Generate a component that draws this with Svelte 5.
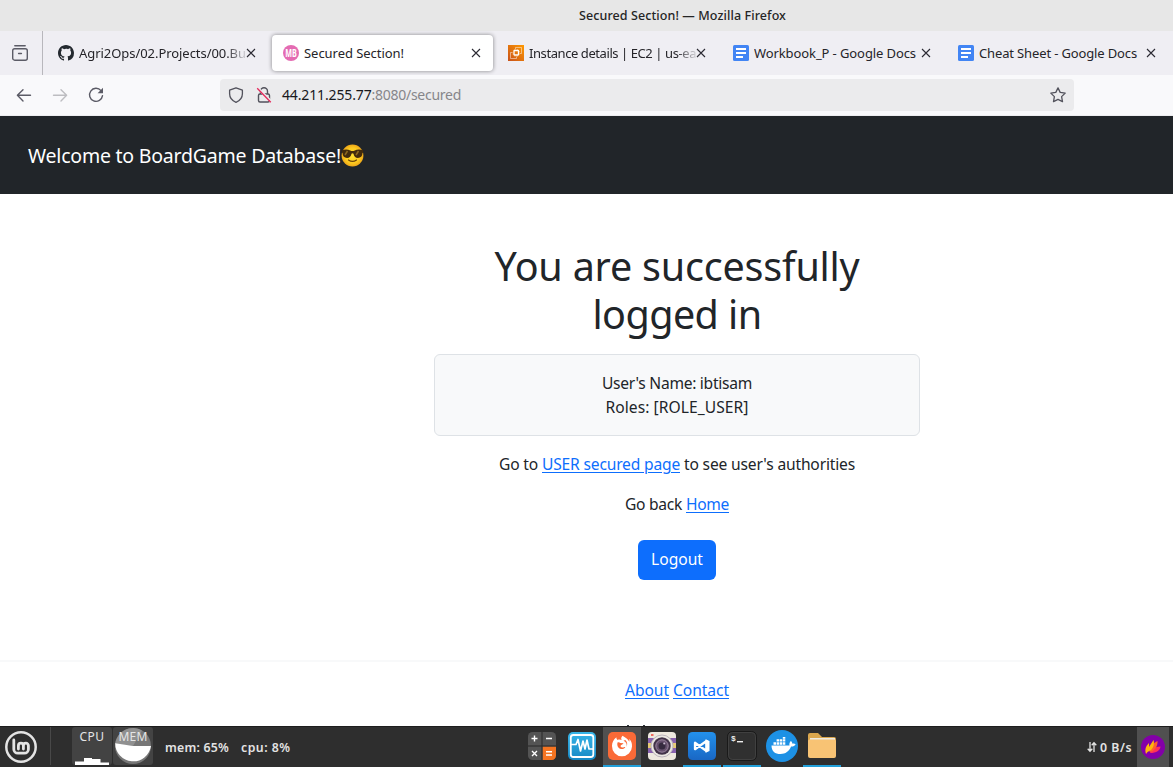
<script>
  const tabs = [
    { icon: 'github', title: 'Agri2Ops/02.Projects/00.Bu', width: 167, fade: true },
    { icon: 'mb', title: 'Secured Section!', width: 100, active: true },
    { icon: 'ec2', title: 'Instance details | EC2 | us-ea', width: 167, fade: true },
    { icon: 'docs', title: 'Workbook_P - Google Docs', width: 162 },
    { icon: 'docs', title: 'Cheat Sheet - Google Docs', width: 158 }
  ];
  const launchers = [
    { icon: 'calc' },
    { icon: 'monitor' },
    { icon: 'firefox', open: true, focused: true },
    { icon: 'camera' },
    { icon: 'code', open: true },
    { icon: 'terminal', open: true },
    { icon: 'docker' },
    { icon: 'folder', open: true }
  ];

  // Tracks a label so that it occupies the given advance width.
  function fit(node, width) {
    const natural = node.getBoundingClientRect().width;
    const count = node.textContent.length;
    node.style.letterSpacing = `${(width - natural) / count}px`;
  }
</script>

<div class="screen">
  <div class="titlebar"><span use:fit={207}>Secured Section! — Mozilla Firefox</span></div>

  <div class="tabs">
    <div class="recent">
      <svg width="16" height="16" viewBox="0 0 16 16" fill="none" stroke="#5b5b66" stroke-width="1.4" stroke-linecap="round">
        <path d="M2.8 .8h10.4" /><rect x=".7" y="3.8" width="14.6" height="11.4" rx="2" /><path d="M6.6 8.5h2.8" />
      </svg>
    </div>
    {#each tabs as tab}
      <div class="tab" class:active={tab.active}>
        <svg class="favicon" width="16" height="16" viewBox="0 0 16 16">
          {#if tab.icon === 'github'}
            <path fill="#24292f" d="M8 0C3.58 0 0 3.58 0 8c0 3.54 2.29 6.53 5.47 7.59.4.07.55-.17.55-.38v-1.49c-2.01.37-2.53-.49-2.69-.94-.09-.23-.48-.94-.82-1.13-.28-.15-.68-.52-.01-.53.63-.01 1.08.58 1.23.82.72 1.21 1.87.87 2.33.66.07-.52.28-.87.51-1.07-1.78-.2-3.64-.89-3.64-3.95 0-.87.31-1.59.82-2.15-.08-.2-.36-1.02.08-2.12 0 0 .67-.21 2.2.82A7.6 7.6 0 0 1 8 3.86c.68 0 1.36.09 2 .27 1.53-1.04 2.2-.82 2.2-.82.44 1.1.16 1.92.08 2.12.51.56.82 1.27.82 2.15 0 3.07-1.87 3.75-3.65 3.95.29.25.54.73.54 1.48v2.2c0 .21.15.46.55.38A8.01 8.01 0 0 0 16 8c0-4.42-3.58-8-8-8z" />
          {:else if tab.icon === 'mb'}
            <circle cx="8" cy="8" r="8" fill="#e46bb2" />
            <text x="8" y="11.6" text-anchor="middle" textLength="11.5" lengthAdjust="spacingAndGlyphs" font-size="10" font-weight="700" fill="#fff">MB</text>
          {:else if tab.icon === 'ec2'}
            <defs><linearGradient id="orange" x1="0" y1="1" x2="1" y2="0"><stop stop-color="#c8511b" /><stop offset="1" stop-color="#f90" /></linearGradient></defs>
            <rect width="16" height="16" fill="url(#orange)" />
            <g fill="none" stroke="#fff">
              <rect x="6" y="5.5" width="4.5" height="4.5" rx=".4" stroke-width="1.3" />
              <path stroke-width=".8" stroke-opacity=".6" d="M4.600 7.500H2.500v6h6V11.500M7.500 4V2.500h6v6h-1.500" />
              <path stroke-width=".8" stroke-opacity=".5" d="M7 4v1.200M9.300 4v1.200M12 6.700h-1.200M12 9h-1.200M7 10.600v1.200M9.300 10.600v1.200M4.500 9h1.200" />
            </g>
          {:else}
            <rect width="16" height="16" rx="1.500" fill="#4285f4" />
            <path fill="#fff" d="M3 3h10v2H3zM3 7h10v2H3zM3 11h7v2H3z" />
          {/if}
        </svg>
        <span class="label" class:fade={tab.fade}><span use:fit={tab.width}>{tab.title}</span></span>
        <svg class="close" width="10" height="10" viewBox="0 0 10 10"><path d="M1 1l8 8M9 1L1 9" stroke="#2b2a33" stroke-width="1.1" /></svg>
      </div>
    {/each}
  </div>

  <div class="toolbar">
    <div class="nav">
      <svg width="16" height="16" viewBox="0 0 16 16" fill="none" stroke="#5b5b66" stroke-width="1.4" stroke-linecap="round" stroke-linejoin="round"><path d="M14.500 8.300H1.500M7 2.700L1.400 8.300 7 13.900" /></svg>
      <svg width="16" height="16" viewBox="0 0 16 16" fill="none" stroke="#bdbdc1" stroke-width="1.4" stroke-linecap="round" stroke-linejoin="round"><path d="M1.500 8.300h13M9 2.700l5.600 5.600L9 13.900" /></svg>
      <svg width="16" height="16" viewBox="0 0 16 16" fill="none" stroke="#5b5b66" stroke-width="1.4" stroke-linecap="round"><path d="M13 3.600A6.500 6.500 0 1 0 14.500 8.600" /><path fill="#5b5b66" stroke="none" d="M15 .8v5.400H9.600z" /></svg>
    </div>
    <div class="address">
      <svg width="16" height="16" viewBox="0 0 16 16" fill="none" stroke="#52525c" stroke-width="1.3" stroke-linejoin="round"><path d="M8 .8l6.400 2.400v3.500c0 3.800-2.600 7-6.400 8.600-3.800-1.600-6.400-4.800-6.400-8.600V3.200z" /></svg>
      <svg class="lock" width="16" height="16" viewBox="0 0 16 16" fill="none" stroke="#52525c" stroke-width="1.4"><path d="M4.500 7V4.300a3.500 3.500 0 0 1 7 0V7" /><rect x="2.500" y="7" width="11" height="8" rx="1.500" /><path stroke="#ececee" stroke-width="2.500" d="M2.600 1.800L15.800 15" /><path stroke="#e5295b" stroke-width="1.300" d="M1.200 1.200L14.800 15.300" /></svg>
      <span class="host" use:fit={89.5}>44.211.255.77</span><span class="path" use:fit={89.5}>:8080/secured</span>
      <svg class="star" width="16" height="16" viewBox="0 0 16 16" fill="none" stroke="#52525c" stroke-width="1.3" stroke-linejoin="round"><path d="M8 .9l2.200 4.500 5 .7-3.600 3.500.9 5L8 12.300l-4.500 2.300.9-5L.8 6.100l5-.7z" /></svg>
    </div>
  </div>

  <div class="page">
    <header>
      <span use:fit={313}>Welcome to BoardGame Database!</span>
      <svg width="23" height="23" viewBox="0 0 23 23">
        <defs><radialGradient id="face"><stop stop-color="#ffdf30" /><stop offset=".7" stop-color="#fcc91f" /><stop offset="1" stop-color="#eea719" /></radialGradient></defs>
        <circle cx="11.500" cy="11.500" r="10.900" fill="url(#face)" />
        <path fill="#422b0d" d="M.8 6.300Q6 4.800 9.300 6.600q2.200 1 4.400 0Q17 4.800 22.200 6.300v2.200l-.7.500c-.3 3.300-1.700 4.900-4.500 4.900-2.700 0-4-1.500-4.500-4.200q-1-.8-2 0c-.5 2.700-1.800 4.200-4.500 4.200-2.800 0-4.200-1.600-4.500-4.900l-.7-.5z" />
        <path stroke="#8d6820" stroke-width="1.500" d="M4 11l2.500-4M15 11l2.500-4" />
        <path fill="none" stroke="#6b4208" stroke-width="1.200" stroke-linecap="round" d="M7.500 16q4 2.800 8 0" />
      </svg>
    </header>

    <main>
      <h1><span use:fit={365}>You are successfully</span><br /><span use:fit={169}>logged in</span></h1>
      <div class="card">
        <div><span use:fit={150}>User's Name: ibtisam</span></div>
        <div><span use:fit={143}>Roles: [ROLE_USER]</span></div>
      </div>
      <p><span use:fit={39}>Go to</span><a href="#user" use:fit={138}>USER secured page</a><span use:fit={171}>to see user's authorities</span></p>
      <p><span use:fit={57}>Go back</span><a href="#home" use:fit={43}>Home</a></p>
      <button><span use:fit={52}>Logout</span></button>
    </main>

    <footer>
      <a href="#about" use:fit={44}>About</a><a href="#contact" use:fit={56}>Contact</a>
      <div class="peek"><i></i><i></i></div>
    </footer>
  </div>

  <div class="panel">
    <svg class="mint" width="34" height="34" viewBox="0 0 34 34" fill="none" stroke="#e3e3e3">
      <circle cx="17" cy="17" r="14.700" stroke-width="2.500" />
      <path stroke-width="2.800" stroke-linecap="round" stroke-linejoin="round" d="M9.800 10v9.200a4 4 0 0 0 4 4h6.600a4 4 0 0 0 4-4v-3.500a2.500 2.500 0 0 0-5 0V19m0-3.300a2.500 2.500 0 0 0-5 0V19" />
    </svg>
    <div class="meters">
      <div class="meter">
        <span use:fit={25}>CPU</span>
        <svg width="40" height="38" viewBox="0 0 40 38"><path fill="#fff" d="M3 34.500h9v-3.500h8v1h8.500v3.500h8.500V38H3z" /></svg>
      </div>
      <div class="meter">
        <svg width="40" height="38" viewBox="0 0 40 38"><circle cx="20" cy="19" r="18" fill="#777" /><path fill="#9b9b9b" d="M20 19L29 3.400A18 18 0 0 0 2.100 17z" opacity=".7" /><path fill="#fff" d="M20 19h18A18 18 0 0 1 2.200 16.200z" /></svg>
        <span use:fit={29}>MEM</span>
      </div>
    </div>
    <div class="stats"><span use:fit={64}>mem: 65%</span><span use:fit={49.5}>cpu: 8%</span></div>

    <div class="launchers">
      {#each launchers as app}
        <div class="slot" class:open={app.open} class:focused={app.focused}>
          <svg width="32" height="32" viewBox="0 0 32 32">
            {#if app.icon === 'calc'}
              <rect x="2" y="2" width="28" height="28" rx="4.500" fill="#545454" />
              <path d="M16.500 16.500H30V25.500a4.500 4.500 0 0 1-4.500 4.500h-9z" fill="#f57421" />
              <path d="M16 2v28M2 16h28" stroke="#292929" />
              <path fill="none" stroke="#fff" stroke-width="1.400" d="M5.500 8.500h6M8.500 5.500v6M20 8.500h6M6 21l5 5M11 21l-5 5M20 21.700h6M20 25h6" />
            {:else if app.icon === 'monitor'}
              <defs><linearGradient id="sky" x2="0" y2="1"><stop stop-color="#38b5e8" /><stop offset="1" stop-color="#1688c4" /></linearGradient></defs>
              <rect x="2" y="2" width="28" height="28" rx="5" fill="url(#sky)" />
              <rect x="4.800" y="5" width="22.500" height="22" rx="2.500" fill="none" stroke="#fff" stroke-width="1.800" />
              <path fill="none" stroke="#fff" stroke-width="1.700" stroke-linejoin="round" d="M5 14.500h5l2-5 2.500 11.500 2.500-10 2 8 2-9 2 9h4" />
            {:else if app.icon === 'firefox'}
              <rect x="2" y="2" width="28" height="28" rx="5" fill="#fa6a37" />
              <path fill="#fff" d="M16.500 5.800c-1.500 1.700-1.600 3-.8 4.300-1.400-.8-3-.7-4.100-.2-1-.8-1.300-1.700-1.200-2.700C7.500 9.500 6 12.500 6 16a10 10 0 0 0 20 .5c.2-3.600-1-6-2.800-7.500.3 1 .3 2 .1 2.700-1.400-3.200-4.200-3.800-6.800-5.900z" />
              <path fill="#fa6a37" d="M11.500 12.500c1-.5 2-.3 2.800.4l3.200.4c-.5 1.300-2.200 1.300-2.800 2.200-.4 1 .3 2 1.700 2.100 1.300 0 1.900-.8 2.900-.6-.8 1.600-2.400 2.400-4.200 2-3-.6-4.400-3.200-3.600-6.500zM17.500 10.700c2.600 1 3.800 3.600 3 6.200 1.200-2.300.9-5.200-1.200-6.900z" />
            {:else if app.icon === 'camera'}
              <rect x="2" y="2" width="28" height="28" rx="4" fill="#eee9df" />
              <path fill="#8862ae" d="M2 8h28v5H2zM2 18h28v5H2z" /><path fill="#e6ca76" d="M2 13h28v5H2z" />
              <path fill="#f16c60" d="M5 4h2.500v2H5z" />
              <circle cx="16" cy="16" r="11" fill="#ece9e2" stroke="#bbb3ba" /><circle cx="16" cy="16" r="8.700" fill="#423348" /><circle cx="16" cy="16" r="6.200" fill="#66516d" stroke="#9b87a0" /><circle cx="16" cy="16" r="3.500" fill="#352a3e" /><circle cx="18.200" cy="13.500" r="1" fill="#c9bbcf" />
            {:else if app.icon === 'code'}
              <defs><linearGradient id="blue" x2="0" y2="1"><stop stop-color="#2391ec" /><stop offset="1" stop-color="#1967c5" /></linearGradient></defs>
              <rect x="2" y="2" width="28" height="28" rx="4.500" fill="url(#blue)" />
              <path fill="none" stroke="#fff" stroke-width="2.300" stroke-linejoin="round" d="M20.500 11v10L9 12.800v6.400z" /><path fill="#fff" d="M19.500 9.300L23.500 11v10l-4 1.700z" />
            {:else if app.icon === 'terminal'}
              <rect x="1.500" y="1.500" width="29" height="29" rx="5" fill="#2a2a2a" stroke="#191919" /><rect x="2.500" y="2.500" width="27" height="27" rx="4" fill="#303030" stroke="#454545" stroke-width=".8" />
              <text x="5" y="11" font-size="8" font-weight="700" fill="#eee" font-family="Liberation Mono, monospace">$</text><path stroke="#eee" stroke-width="1.400" d="M11 11.700h6" />
            {:else if app.icon === 'docker'}
              <circle cx="16" cy="16" r="16" fill="#1d91e5" />
              <path fill="#fff" d="M5.500 15.500h18c-.4-2 .2-3.500 1.300-4.600 1 .8 1.500 1.700 1.600 2.800 1.300-.3 2.300-.1 3.200.5-.8 1.800-2.400 2.500-4.500 2.400C23 21.700 19.500 24 14.500 24c-5.500 0-9-2.500-9-8.500z" />
              <path fill="#fff" d="M7.500 12.200h2.500v2.600H7.500zM10.600 12.200h2.500v2.600h-2.500zM13.700 12.200h2.500v2.600h-2.500zM16.800 12.200h2.500v2.600h-2.500zM10.600 9.300h2.500v2.300h-2.500zM13.700 9.300h2.500v2.300h-2.500zM16.800 9.300h2.500v2.300h-2.500zM16.800 7h2.500v1.800h-2.500z" />
            {:else}
              <path fill="#dba74e" d="M2 5q0-2 2-2h8l4 4h12q2 0 2 2v6H2z" /><path fill="#eeeae1" d="M4 8h25v5H4z" /><path fill="#f8c374" d="M2 11q0-1.500 1.500-1.500H28q2 0 2 1.500v15q0 2-2 2H4q-2 0-2-2z" />
            {/if}
          </svg>
        </div>
      {/each}
    </div>

    <div class="net">
      <svg width="10" height="12" viewBox="0 0 10 12" fill="none" stroke="#e3e3e3" stroke-width="1.300"><path d="M3 1v9M.7 7.800L3 10.300l2.300-2.500M7 11V2M4.700 4.200L7 1.700l2.300 2.500" /></svg>
      <span use:fit={32}>0 B/s</span>
    </div>
    <div class="tray">
      <svg width="24" height="24" viewBox="0 0 24 24">
        <circle cx="12" cy="12" r="12" fill="#8300a8" />
        <path fill="#ff3159" d="M9 18c1-3.500 5-6.500 10.500-6.500C19 15.500 15.500 18 9 18z" />
        <path fill="#ff612e" d="M8.500 17c.5-5 3-8.500 8-11 .3 4-1.500 8-5.500 10.500z" />
        <path fill="#ffb70b" d="M5 19C3.500 14 5 11 8 8v4L12.500 5c1.200 3.500 0 7.500-2.500 10L6.500 17z" />
      </svg>
    </div>
  </div>
</div>

<style>
  :global(body) { margin: 0; overflow: hidden; }
  svg { display: block; flex: none; }
  .screen {
    width: 1173px; height: 767px; overflow: hidden; display: flex; flex-direction: column;
    font-family: "Noto Sans", "Open Sans", sans-serif; background: #fff; color: #212529; white-space: nowrap;
  }
  .titlebar { flex: none; width: 1365px; height: 31px; background: #e7e7e7; display: flex; align-items: center; justify-content: center; font-size: 12.5px; font-weight: 500; color: #252525; }
  .tabs { flex: none; height: 44px; background: #efeef3; display: flex; font-size: 13px; color: #252429; }
  .recent { flex: none; box-sizing: border-box; width: 43px; padding: 14px 0 0 12px; border-right: 1px solid #b8b7bc; margin-right: 2px; }
  .tab { flex: none; box-sizing: border-box; width: 221px; height: 36px; margin: 4px 2px 4px; padding: 0 11px; border-radius: 4px; display: flex; align-items: center; }
  .tab.active { background: #fff; box-shadow: 0 0 4px rgba(0, 0, 0, .45); }
  .label { margin-left: 5px; width: 167px; overflow: hidden; line-height: 20px; }
  .label.fade { mask-image: linear-gradient(to right, #000 147px, transparent 170px); }
  .toolbar { flex: none; box-sizing: border-box; height: 41px; background: #f9f9fb; border-bottom: 1px solid #ededf0; display: flex; padding-top: 4px; }
  .nav { width: 204px; padding-left: 16px; display: flex; gap: 20px; align-items: center; height: 32px; }
  .address { box-sizing: border-box; width: 854px; height: 32px; padding: 0 8px; background: #ebebed; border-radius: 4px; display: flex; align-items: center; font-size: 14px; }
  .address span { margin-top: -2px; }
  .lock { margin: 0 10px 0 12px; }
  .host { color: #18181c; }
  .path { color: #86868a; }
  .star { margin-left: auto; }
  .page { width: 1354px; height: 610px; overflow: hidden; background: #fff; font-size: 15.6px; font-weight: 380; }
  header { height: 78px; box-sizing: border-box; padding: 1px 28px 0; background: #212529; color: #fff; display: flex; align-items: center; font-size: 19.5px; }
  main { width: 486px; margin: 0 auto; padding-top: 48px; text-align: center; line-height: 24px; }
  h1 { margin: 0 0 16px; font-size: 39.5px; line-height: 48px; font-weight: 400; }
  .card { box-sizing: border-box; height: 82px; padding: 16px; border: 1px solid #dee2e6; border-radius: 6px; background: #f8f9fa; margin-bottom: 16px; }
  p { margin: 0 0 16px; display: flex; justify-content: center; gap: 4px; }
  a { color: #0d6efd; text-decoration: underline; text-decoration-thickness: 1px; text-underline-offset: 2px; }
  button { display: block; box-sizing: border-box; height: 40px; width: 78px; margin: 24px auto 0; padding: 0 0 2px; border: 0; border-radius: 6px; background: #0d6efd; color: #fff; font: inherit; line-height: 38px; }
  footer { margin-top: 80px; border-top: 2px solid #f8f9fa; padding-top: 16px; text-align: center; line-height: 24px; display: flex; flex-wrap: wrap; justify-content: center; column-gap: 4px; }
  .peek { box-sizing: border-box; width: 100%; display: flex; padding: 23px 0 0 627px; gap: 14px; }
  .peek i { width: 2px; height: 2px; background: #343a40; }
  .panel { flex: none; box-sizing: border-box; height: 41px; border-top: 1px solid #1d1d1d; background: #2e2e2e; color: #e3e3e3; display: flex; }
  .mint { margin: 3px 12px 0 4px; }
  .meters { border-left: 1px solid #484848; padding-left: 21px; display: flex; gap: 1px; height: 38px; }
  .meter { width: 40px; height: 38px; border-radius: 3px; background: #434343; display: grid; font-size: 12px; line-height: 20px; }
  .meter > * { grid-area: 1 / 1; }
  .meter > span { justify-self: center; color: #e5e5e5; }
  .stats { width: 362px; box-sizing: border-box; padding-left: 12px; display: flex; gap: 12px; font-size: 12.3px; font-weight: 600; line-height: 41px; }
  .launchers { display: flex; gap: 2px; margin-left: 8px; }
  .slot { box-sizing: border-box; width: 38px; height: 40px; padding: 3px 3px 0; }
  .slot.open { border-bottom: 2px solid #219fd9; }
  .slot.focused { background: #505050; }
  .net { margin-left: auto; display: flex; align-items: center; gap: 3px; font-size: 12.3px; font-weight: 600; }
  .tray { width: 32px; height: 40px; margin: 0 4px 0 5px; background: #505050; display: grid; place-items: center; }
</style>
